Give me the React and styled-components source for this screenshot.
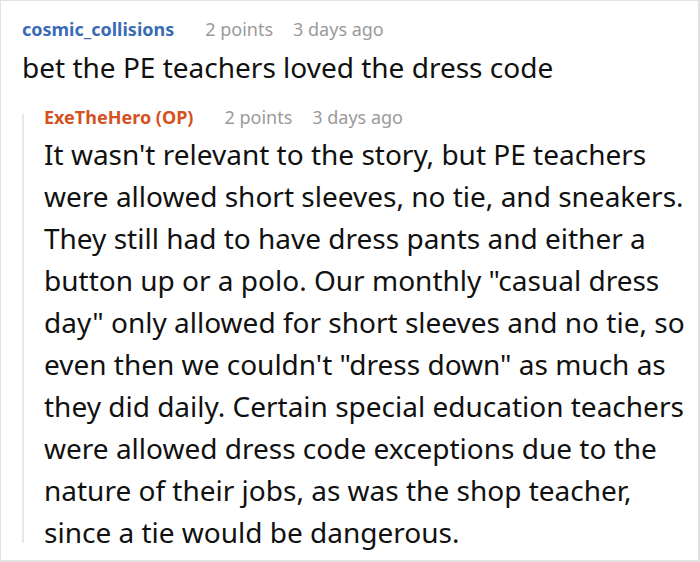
import React from "react";
import styled, { createGlobalStyle } from "styled-components";

const GlobalStyle = createGlobalStyle`
  html, body {
    margin: 0;
    padding: 0;
    background: #ffffff;
  }
  body {
    font-family: "Noto Sans", "Open Sans", sans-serif;
  }
`;

const Frame = styled.div`
  width: 700px;
  height: 562px;
  box-sizing: border-box;
  border: 1px solid #e2e2e2;
  border-right-width: 2px;
  border-bottom-width: 2px;
  padding: 16px 0 0 21px;
  overflow: hidden;
`;

const Comment = styled.div`
  display: flex;
  flex-direction: column;
`;

const Meta = styled.div`
  display: flex;
  align-items: baseline;
  height: 24px;
  line-height: 24px;
  margin-bottom: ${(p) => (p.$reply ? "4px" : "5px")};
`;

const Author = styled.span`
  font-size: 18px;
  font-weight: 700;
  color: ${(p) => (p.$op ? "#d4521f" : "#3a6cb4")};
  margin-right: 31px;
`;

const Info = styled.span`
  font-size: 18px;
  color: #9a9a9a;
  margin-right: 20px;
`;

const Body = styled.p`
  margin: 0;
  font-size: 28px;
  line-height: 42px;
  color: #111111;
`;

const Replies = styled.div`
  display: flex;
  margin-top: 17px;
`;

const Rail = styled.div`
  flex: 0 0 2px;
  background: #e8e8e8;
  margin: 9px 0 10px;
`;

const ReplyContent = styled.div`
  flex: 1;
  padding-left: 20px;
`;

const App = () => (
  <>
    <GlobalStyle />
    <Frame>
      <Comment>
        <Meta>
          <Author>cosmic_collisions</Author>
          <Info>2 points</Info>
          <Info>3 days ago</Info>
        </Meta>
        <Body>bet the PE teachers loved the dress code</Body>
        <Replies>
          <Rail />
          <ReplyContent>
            <Meta $reply>
              <Author $op>ExeTheHero (OP)</Author>
              <Info>2 points</Info>
              <Info>3 days ago</Info>
            </Meta>
            <Body>
              It wasn't relevant to the story, but PE teachers were allowed
              short sleeves, no tie, and sneakers. They still had to have dress
              pants and either a button up or a polo. Our monthly "casual dress
              day" only allowed for short sleeves and no tie, so even then we
              couldn't "dress down" as much as they did daily. Certain special
              education teachers were allowed dress code exceptions due to the
              nature of their jobs, as was the shop teacher, since a tie would
              be dangerous.
            </Body>
          </ReplyContent>
        </Replies>
      </Comment>
    </Frame>
  </>
);

export default App;
